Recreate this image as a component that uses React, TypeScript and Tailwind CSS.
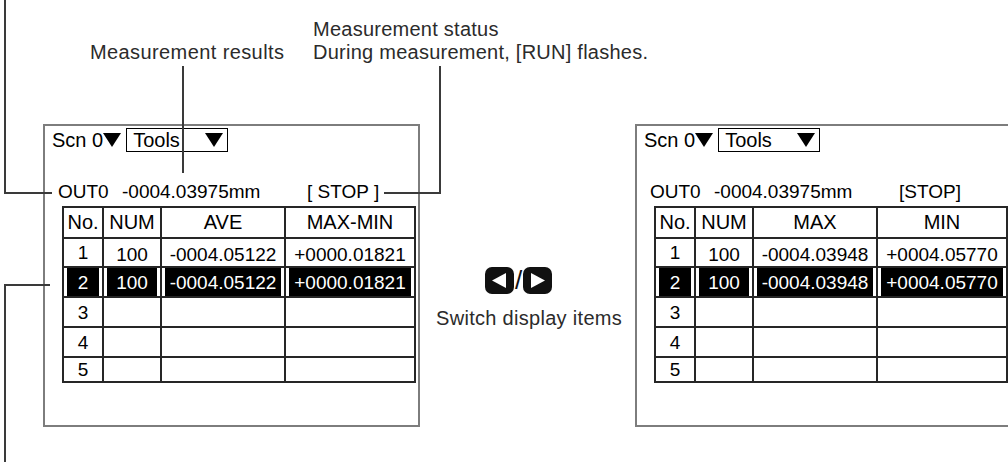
import React from "react";

type PanelData = {
  heads: string[];
  values: string[];
  status: string;
};

const left: PanelData = {
  heads: ["No.", "NUM", "AVE", "MAX-MIN"],
  values: ["100", "-0004.05122", "+0000.01821"],
  status: "[ STOP ]",
};

const right: PanelData = {
  heads: ["No.", "NUM", "MAX", "MIN"],
  values: ["100", "-0004.03948", "+0004.05770"],
  status: "[STOP]",
};

const widths = ["w-[40px]", "w-[58px]", "w-[124px]", "w-[130px]"];

function Down() {
  return (
    <svg width="18" height="14" viewBox="0 0 18 14" className="shrink-0">
      <polygon points="0,0 18,0 9,14" fill="#000" />
    </svg>
  );
}

function Screen({ data, className }: { data: PanelData; className: string }) {
  return (
    <div className={`h-[303px] border-2 border-[#7d7d7d] pl-[7px] pt-[2px] text-[20px] leading-[20px] text-black ${className}`}>
      {/* scene / tool selector */}
      <div className="flex h-[24px] items-center">
        <span>Scn 0</span>
        <Down />
        <div className="ml-[5px] flex h-[24px] w-[102px] items-center justify-between border border-black pl-[6px] pr-[4px]">
          <span>Tools</span>
          <Down />
        </div>
      </div>

      <div className="mt-[30px] flex h-[19px] items-center text-[19px]">
        <span className="ml-[6px] w-[64px]">OUT0</span>
        <span className="w-[185px]">-0004.03975mm</span>
        <span>{data.status}</span>
      </div>

      <table className="ml-[10px] mt-[5px] table-fixed border-collapse text-center text-[19px] leading-[19px]">
        <colgroup>
          {widths.map((w) => (
            <col key={w} className={w} />
          ))}
        </colgroup>
        <tbody>
          <tr className="h-[31px] text-[20px]">
            {data.heads.map((h) => (
              <td key={h} className="border-2 border-[#262626] p-0">
                {h}
              </td>
            ))}
          </tr>
          <tr className="h-[29px]">
            <td className="border-2 border-[#262626] p-0">1</td>
            {data.values.map((v) => (
              <td key={v} className="border-2 border-[#262626] p-0 pt-[3px]">
                {v}
              </td>
            ))}
          </tr>
          <tr className="h-[30px]">
            {["2", ...data.values].map((v) => (
              <td key={v} className="border-2 border-[#262626] p-0 px-[3px]">
                <div className="flex h-[28px] items-center justify-center bg-black text-white">{v}</div>
              </td>
            ))}
          </tr>
          {["3", "4", "5"].map((n) => (
            <tr key={n} className={n === "5" ? "h-[25px]" : "h-[30px]"}>
              <td className="border-2 border-[#262626] p-0">{n}</td>
              <td className="border-2 border-[#262626] p-0" />
              <td className="border-2 border-[#262626] p-0" />
              <td className="border-2 border-[#262626] p-0" />
            </tr>
          ))}
        </tbody>
      </table>
    </div>
  );
}

function Arrow({ dir }: { dir: "l" | "r" }) {
  return (
    <svg width="29" height="27" viewBox="0 0 29 27">
      <rect x="0" y="0" width="29" height="27" rx="7" fill="#111" />
      {dir === "l" ? (
        <polygon points="7,13.5 21,6 21,21" fill="#fff" />
      ) : (
        <polygon points="22,13.5 8,6 8,21" fill="#fff" />
      )}
    </svg>
  );
}

export default function App() {
  return (
    <div className="relative h-[466px] w-[1008px] overflow-hidden bg-white font-['Liberation_Sans',Arial,sans-serif]">
      {/* callout texts */}
      <div className="flex h-[124px] pt-[18px] text-[20px] leading-[23px] tracking-[0.25px] text-[#2b2b2b]">
        <div className="ml-[90px] w-[223px] pt-[23px] tracking-[0.4px]">Measurement results</div>
        <div>
          <div>Measurement status</div>
          <div>During measurement, [RUN] flashes.</div>
        </div>
      </div>

      <div className="flex">
        <Screen data={left} className="ml-[43px] w-[377px] shrink-0" />

        <div className="flex w-[215px] shrink-0 flex-col">
          <div className="ml-[65px] mt-[143px] flex items-center">
            <Arrow dir="l" />
            <span className="mx-[1px] text-[26px] leading-[27px] text-[#111]">/</span>
            <Arrow dir="r" />
          </div>
          <div className="ml-[16px] mt-[13px] text-[20px] leading-[23px] tracking-[0.3px] text-[#2b2b2b]">
            Switch display items
          </div>
        </div>

        <Screen data={right} className="w-[380px] shrink-0" />
      </div>

      {/* leader lines */}
      <div className="absolute left-[4px] top-0 h-[194px] w-[2px] bg-[#3a3a3a]" />
      <div className="absolute left-[4px] top-[192px] h-[2px] w-[48px] bg-[#3a3a3a]" />
      <div className="absolute left-[182px] top-[66px] h-[107px] w-[2px] bg-[#3a3a3a]" />
      <div className="absolute left-[439px] top-[66px] h-[128px] w-[2px] bg-[#3a3a3a]" />
      <div className="absolute left-[384px] top-[192px] h-[2px] w-[57px] bg-[#3a3a3a]" />
      <div className="absolute left-[4px] top-[284px] h-[2px] w-[46px] bg-[#3a3a3a]" />
      <div className="absolute left-[4px] top-[284px] h-[178px] w-[2px] bg-[#3a3a3a]" />
    </div>
  );
}
